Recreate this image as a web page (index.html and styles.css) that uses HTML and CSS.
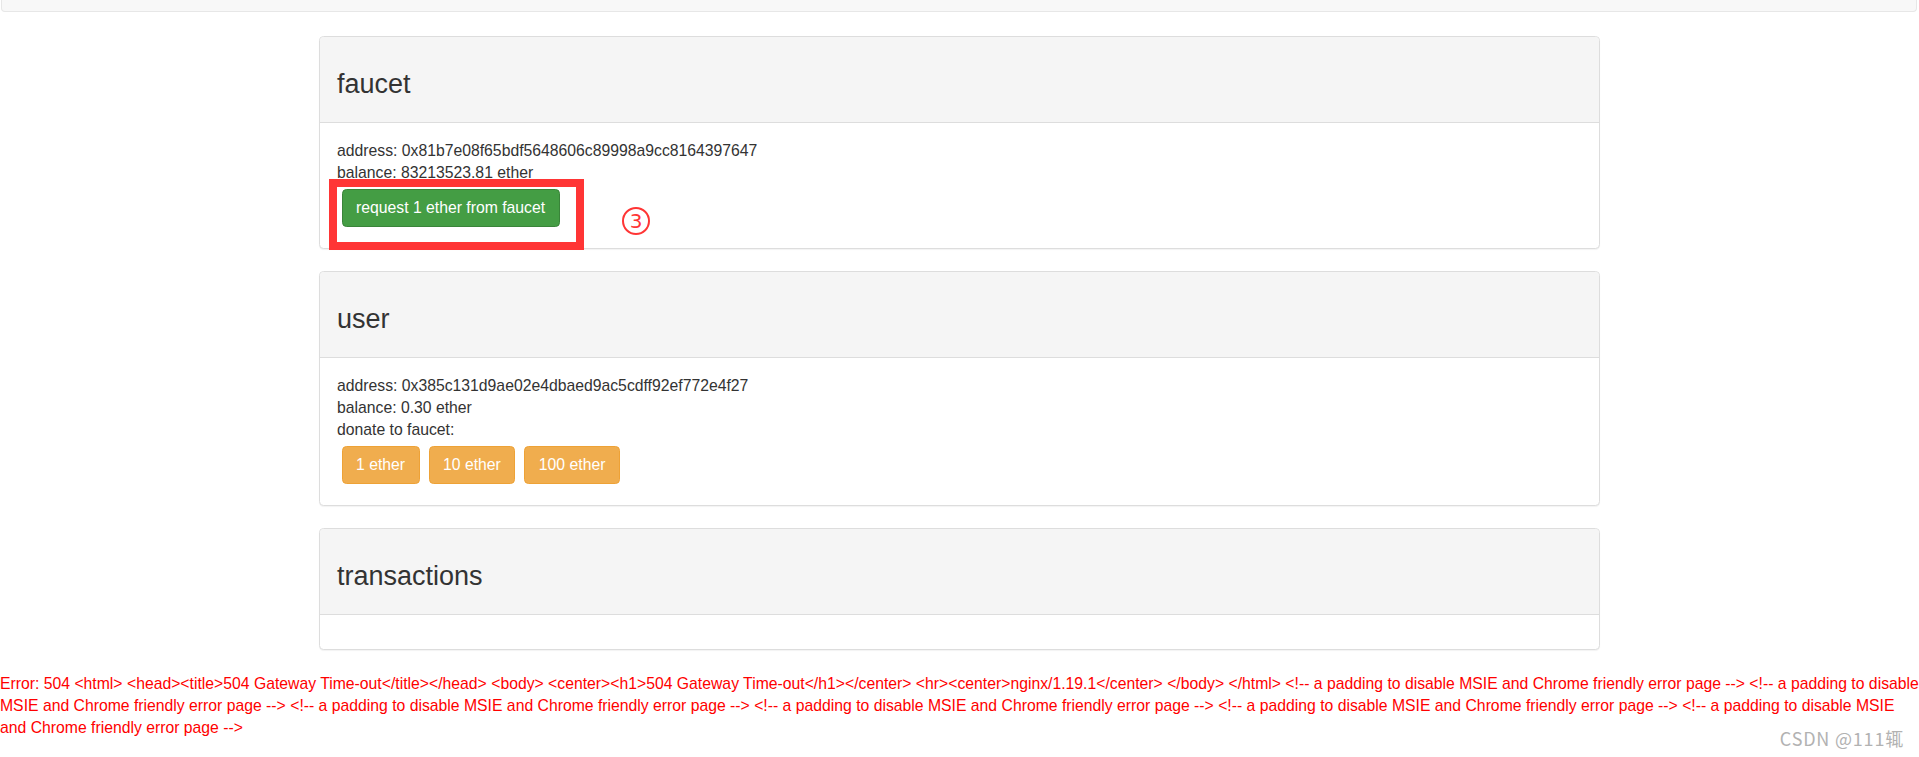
FILE: index.html
```html
<!DOCTYPE html>
<html>
<head>
<meta charset="utf-8">
<title>faucet</title>
<link rel="stylesheet" href="styles.css">
</head>
<body>
<div class="navbar"></div>
<div class="container">
  <div class="panel">
    <div class="panel-heading"><h3 class="panel-title">faucet</h3></div>
    <div class="panel-body">
      <div>address: 0x81b7e08f65bdf5648606c89998a9cc8164397647</div>
      <div>balance: 83213523.81 ether</div>
      <div class="btn-row">
        <button class="btn btn-success">request 1 ether from faucet</button>
      </div>
    </div>
    <div class="mark-box"></div>
    <div class="mark-num">3</div>
  </div>
  <div class="panel">
    <div class="panel-heading"><h3 class="panel-title">user</h3></div>
    <div class="panel-body">
      <div>address: 0x385c131d9ae02e4dbaed9ac5cdff92ef772e4f27</div>
      <div>balance: 0.30 ether</div>
      <div>donate to faucet:</div>
      <div class="btn-row">
        <button class="btn btn-warning">1 ether</button>
        <button class="btn btn-warning">10 ether</button>
        <button class="btn btn-warning">100 ether</button>
      </div>
    </div>
  </div>
  <div class="panel">
    <div class="panel-heading"><h3 class="panel-title">transactions</h3></div>
    <div class="panel-body empty"></div>
  </div>
</div>
<div class="error">Error: 504 &lt;html&gt; &lt;head&gt;&lt;title&gt;504 Gateway Time-out&lt;/title&gt;&lt;/head&gt; &lt;body&gt; &lt;center&gt;&lt;h1&gt;504 Gateway Time-out&lt;/h1&gt;&lt;/center&gt; &lt;hr&gt;&lt;center&gt;nginx/1.19.1&lt;/center&gt; &lt;/body&gt; &lt;/html&gt; &lt;!-- a padding to disable MSIE and Chrome friendly error page --&gt; &lt;!-- a padding to disable MSIE and Chrome friendly error page --&gt; &lt;!-- a padding to disable MSIE and Chrome friendly error page --&gt; &lt;!-- a padding to disable MSIE and Chrome friendly error page --&gt; &lt;!-- a padding to disable MSIE and Chrome friendly error page --&gt; &lt;!-- a padding to disable MSIE and Chrome friendly error page --&gt;</div>
<div class="watermark">CSDN @111辄</div>
</body>
</html>
```
FILE: styles.css
```css
html, body {
  margin: 0;
  padding: 0;
}
body {
  font-family: "Liberation Sans", Arial, sans-serif;
  font-size: 15.75px;
  line-height: 22px;
  color: #333;
  background: #fff;
  width: 1919px;
  min-height: 757px;
  position: relative;
}
.navbar {
  height: 11px;
  margin: 0 2px 24px 1px;
  background: #f8f8f8;
  border: 1px solid #e7e7e7;
  border-top: none;
  border-radius: 0 0 4px 4px;
}
.container {
  width: 1281px;
  margin: 0 auto;
}
.panel {
  position: relative;
  border: 1px solid #ddd;
  border-radius: 4.5px;
  margin-bottom: 22.5px;
  background: #fff;
  box-shadow: 0 1px 1px rgba(0, 0, 0, 0.05);
}
.panel-heading {
  background: #f5f5f5;
  border-bottom: 1px solid #ddd;
  border-radius: 4px 4px 0 0;
  padding: 32px 17px 23px;
}
.panel-title {
  margin: 0;
  font-size: 27px;
  line-height: 30px;
  font-weight: 500;
  color: #333;
}
.panel-body {
  padding: 17px 17px 16px;
}
.panel-body.empty {
  padding: 17px;
}
.btn-row {
  display: flex;
}
.btn {
  font-family: "Liberation Sans", Arial, sans-serif;
  font-size: 15.75px;
  line-height: 22.5px;
  padding: 6.75px 13.5px;
  margin: 5px 4.5px 4.5px 4.5px;
  border: 1px solid transparent;
  border-radius: 4.5px;
  color: #fff;
  cursor: pointer;
}
.btn-success {
  background: #449d44;
  border-color: #398439;
}
.btn-warning {
  background: #f0ad4e;
  border-color: #eea236;
}
.mark-box {
  position: absolute;
  left: 9px;
  top: 142px;
  width: 239px;
  height: 55px;
  border: 8px solid #ff3535;
}
.mark-num {
  position: absolute;
  left: 302px;
  top: 170px;
  width: 24px;
  height: 24px;
  border: 2px solid #ff3535;
  border-radius: 50%;
  color: #ff3535;
  font-family: "DejaVu Sans", sans-serif;
  font-size: 20px;
  line-height: 24px;
  text-align: center;
}
.error {
  color: #f00;
  font-size: 15.75px;
  line-height: 22px;
}
.watermark {
  position: absolute;
  right: 15px;
  top: 727px;
  font-family: "Noto Sans CJK SC", "Liberation Sans", sans-serif;
  font-size: 18px;
  letter-spacing: 0.8px;
  line-height: 22px;
  color: #b2b2b2;
}
```
